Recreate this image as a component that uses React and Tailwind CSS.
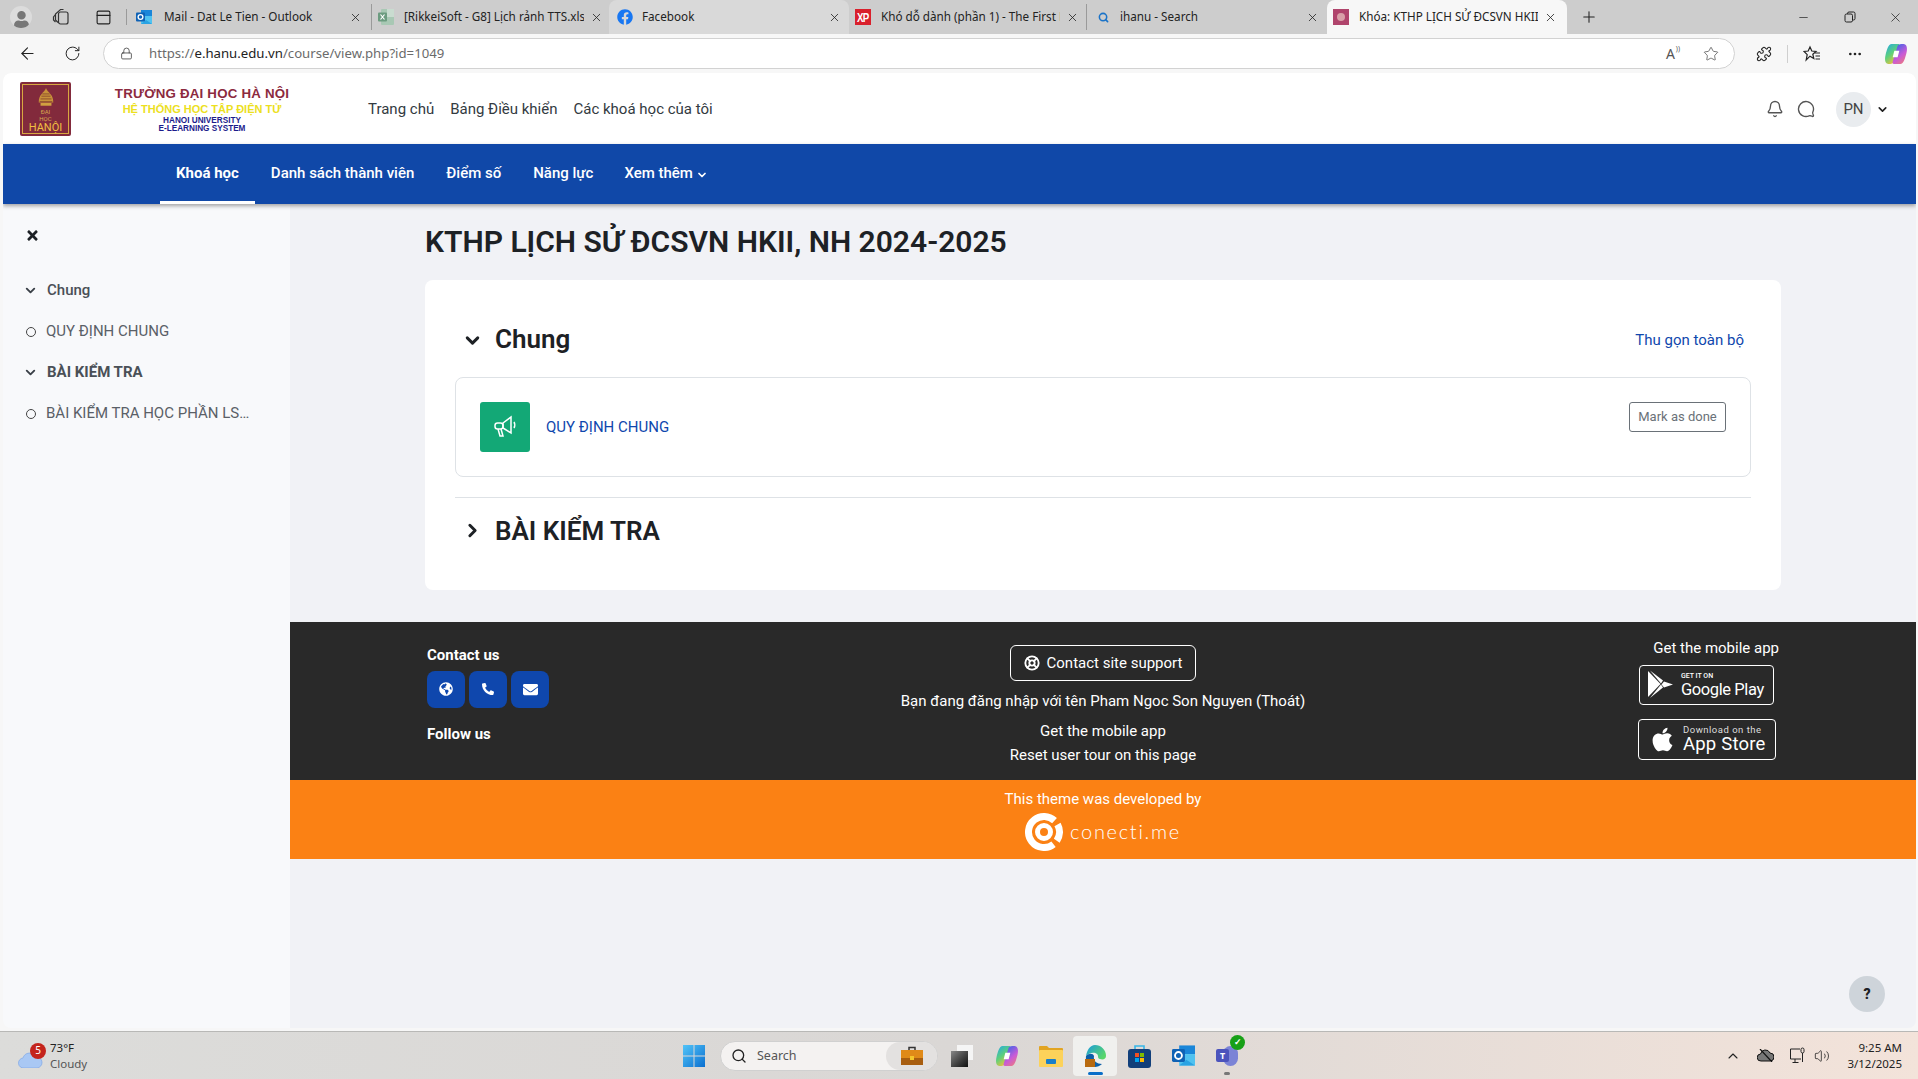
import {
  ArrowLeft,
  Bell,
  ChevronDown,
  ChevronRight,
  ChevronUp,
  Ellipsis,
  LifeBuoy,
  Lock,
  MessageCircle,
  Minus,
  PanelTop,
  Plus,
  Puzzle,
  RotateCw,
  Search,
  Star,
  Volume2,
  X,
} from "lucide-react";
import {
  FaApple,
  FaEnvelope,
  FaFacebook,
  FaGlobeAmericas,
  FaPhoneAlt,
  FaTimes,
  FaUser,
} from "react-icons/fa";

const chromeFont = "font-['Noto_Sans',sans-serif]";

function OutlookIcon({ size = 16 }) {
  return (
    <svg width={size} height={size} viewBox="0 0 16 16">
      <rect x="5" y="1" width="11" height="6" fill="#1a86d9" />
      <rect x="5" y="7" width="11" height="8" fill="#50c2f0" />
      <path d="M5 15l5-4 6 4z" fill="#2aa3e3" />
      <rect x="0" y="3.5" width="9" height="9" rx="1" fill="#0f62b5" />
      <circle cx="4.5" cy="8" r="2.4" fill="none" stroke="#fff" strokeWidth="1.3" />
    </svg>
  );
}

function ExcelIcon() {
  return (
    <svg width="16" height="16" viewBox="0 0 16 16">
      <rect x="3" y="0" width="13" height="16" rx="1" fill="#a8c8b4" />
      <rect x="9" y="0" width="7" height="8" fill="#c9dcd0" />
      <rect x="0" y="3.5" width="9" height="9" rx="1" fill="#6c9c80" />
      <path d="M2.5 5.5l4 5M6.5 5.5l-4 5" stroke="#fff" strokeWidth="1.2" />
    </svg>
  );
}

function XpIcon() {
  return (
    <div className="flex h-4 w-4 items-center justify-center bg-[#d9202c] font-['Liberation_Sans',sans-serif] text-[13px] font-bold leading-none tracking-[-1px] text-white">
      <span className="scale-x-75">XP</span>
    </div>
  );
}

function HanuFavicon() {
  return (
    <div className="flex h-4 w-4 items-center justify-center bg-[#b0446c]">
      <div className="h-2 w-2 rounded-full bg-[#d9a0a8]" />
    </div>
  );
}

function CopilotMark({ size, idA, idB }) {
  return (
    <svg width={size} height={size} viewBox="0 0 20 20">
      <defs>
        <linearGradient id={idA} x1="0" y1="0" x2="0.6" y2="1">
          <stop offset="0" stopColor="#1fa8e8" />
          <stop offset="0.55" stopColor="#5fd07a" />
          <stop offset="1" stopColor="#f3c13a" />
        </linearGradient>
        <linearGradient id={idB} x1="0.4" y1="0" x2="1" y2="1">
          <stop offset="0" stopColor="#4a62e6" />
          <stop offset="0.5" stopColor="#c85ad8" />
          <stop offset="1" stopColor="#f5806a" />
        </linearGradient>
      </defs>
      <path d="M6 1h6c1 0 1.300 1 1 2L9 16c-.5 2-2 3-4 3H3C0 19-.5 15 .5 11 1.500 7 3 1 6 1z" fill={`url(#${idA})`} />
      <path d="M14 19H8c-1 0-1.300-1-1-2L11 4c.5-2 2-3 4-3h2c3 0 3.500 4 2.500 8-1 4-2.500 10-5.500 10z" fill={`url(#${idB})`} />
      <path d="M8.500 7h4.500l-1.500 6H7z" fill="#fff" />
    </svg>
  );
}

const tabs = [
  { key: "mail", title: "Mail - Dat Le Tien - Outlook", icon: <OutlookIcon />, box: "w-[245px] pl-[9px] pr-[9px]", text: "ml-[12px]", sep: true },
  { key: "xls", title: "[RikkeiSoft - G8] Lịch rảnh TTS.xlsx", icon: <ExcelIcon />, box: "w-[237px] pl-[6px] pr-[6px]", text: "ml-[10px]" },
  { key: "fb", title: "Facebook", icon: <FaFacebook className="text-[16px] text-[#1877f2]" />, box: "w-[240px] pl-[8px] pr-[8px] bg-[#d9d9d9] rounded-lg rounded-b-none", text: "ml-[9px]" },
  { key: "xp", title: "Khó dỗ dành (phần 1) - The First News", icon: <XpIcon />, box: "w-[238px] pl-[6px] pr-[7px]", text: "ml-[10px]", sep: true },
  { key: "search", title: "ihanu - Search", icon: <Search size={11} strokeWidth={3.4} className="text-[#1a73c8]" />, box: "w-[240px] pl-[8px] pr-[8px]", text: "ml-[9px]" },
  { key: "hanu", title: "Khóa: KTHP LỊCH SỬ ĐCSVN HKII, NH 2024-2025", icon: <HanuFavicon />, box: "w-[240px] pl-[6px] pr-[10px] bg-[#f7f7f7] rounded-lg rounded-b-none", text: "ml-[10px]" },
];

function BrowserTab({ tab }) {
  return (
    <div className={`flex h-[34px] shrink-0 items-center ${tab.box} ${tab.sep ? "border-r border-[#9a9a9a] [border-image:linear-gradient(transparent_15%,#9a9a9a_15%,#9a9a9a_85%,transparent_85%)_1]" : ""}`}>
      <div className="flex w-4 shrink-0 justify-center">{tab.icon}</div>
      <span className={`${tab.text} min-w-0 flex-1 overflow-hidden whitespace-nowrap text-[11.7px] text-[#222]`}>
        {tab.title}
      </span>
      <X size={13} strokeWidth={1.5} className="ml-[6px] shrink-0 text-[#222]" />
    </div>
  );
}

function TabBar() {
  return (
    <div className={`flex h-[34px] items-center bg-[#cdcdcd] ${chromeFont}`}>
      <div className="flex w-[127px] shrink-0 items-center border-r border-[#9a9a9a] [border-image:linear-gradient(transparent_15%,#9a9a9a_15%,#9a9a9a_85%,transparent_85%)_1]">
        <div className="ml-[10px] flex h-[22px] w-[22px] items-end justify-center overflow-hidden rounded-full bg-[#dcdcdc] text-[#777]">
          <FaUser className="text-[17px]" />
        </div>
        <svg width="18" height="18" viewBox="0 0 18 18" className="ml-[20px]" fill="none" stroke="#333" strokeWidth="1.2">
          <rect x="6.5" y="4" width="9.5" height="12" rx="2" />
          <path d="M6 14.5L3.5 12V6l5-4.5h3" />
          <path d="M3.5 6.5L1.5 9v3l2 2" />
        </svg>
        <PanelTop size={17} strokeWidth={1.6} className="ml-[25px] text-[#222]" />
      </div>
      {tabs.map((tab) => (
        <BrowserTab key={tab.key} tab={tab} />
      ))}
      <Plus size={18} strokeWidth={1.4} className="ml-[13px] text-[#222]" />
      <div className="flex flex-1 items-center justify-end pr-[15px] text-[#222]">
        <Minus size={13} strokeWidth={1.3} />
        <svg width="12" height="12" viewBox="0 0 12 12" className="ml-[34px]" fill="none" stroke="#222">
          <rect x="1" y="3" width="7.5" height="8" rx="1.5" />
          <path d="M3.5 3V2.5A1.5 1.5 0 0 1 5 1h4.5A1.5 1.5 0 0 1 11 2.5v5A1.5 1.5 0 0 1 9.5 9H8.5" />
        </svg>
        <X size={15} strokeWidth={1.2} className="ml-[32px]" />
      </div>
    </div>
  );
}

function Toolbar() {
  return (
    <div className={`flex h-[39px] items-center bg-[#f7f7f7] ${chromeFont}`}>
      <ArrowLeft size={19} strokeWidth={1.4} className="ml-[18px] shrink-0 text-[#222]" />
      <RotateCw size={17} strokeWidth={1.4} className="ml-[27px] shrink-0 text-[#222]" />
      <div className="ml-[22px] flex h-[31px] w-[1632px] shrink-0 items-center rounded-full border border-[#d2d2d2] bg-white">
        <Lock size={13} strokeWidth={1.4} className="ml-[16px] text-[#333]" />
        <span className="ml-[16px] pt-[1px] text-[13.2px] text-[#6b6b6b]">
          https://<span className="text-[#222]">e.hanu.edu.vn</span>/course/view.php?id=1049
        </span>
        <div className="ml-auto flex items-center pr-[15px] text-[#555]">
          <span className="relative text-[14px] leading-none">
            A
            <span className="absolute -right-[5px] -top-[2px] text-[7px]">))</span>
          </span>
          <Star size={16} strokeWidth={1.2} className="ml-[28px]" />
        </div>
      </div>
      <Puzzle size={16} strokeWidth={1.6} className="ml-[21px] shrink-0 text-[#222]" />
      <div className="ml-[15px] h-[18px] w-px bg-[#cfcfcf]" />
      <svg width="18" height="18" viewBox="0 0 18 18" fill="none" stroke="#222" strokeWidth="1.2" className="ml-[15px] shrink-0">
        <path d="M7 2l1.8 4 4.2.4-3.2 2.8 1 4.3L7 11.2 3.2 15l1-5.3L1 6.4 5.2 6z" />
        <path d="M12 8h5M12.5 11h4.5M12.5 14h4.5" />
      </svg>
      <Ellipsis size={16} className="ml-[26px] shrink-0 text-[#222]" />
      <div className="ml-[22px] shrink-0">
        <CopilotMark size={22} idA="copA" idB="copB" />
      </div>
    </div>
  );
}

function SiteLogo() {
  return (
    <div className="flex items-center">
      <div className="ml-[17px] h-[54px] w-[51px] shrink-0 rounded-[2px] bg-[#822a3c] p-[2px]">
        <div className="flex h-full w-full flex-col items-center border border-[#d8a840] pt-[3px]">
          <svg width="20" height="22" viewBox="0 0 20 22">
            <path d="M10 0c1 3 3 4 5 7 2 2 3 5 3 9H2c0-4 1-7 3-9 2-3 4-4 5-7z" fill="#c8913a" />
            <path d="M4 12h12M5 9h10M6 6.5h8M3 15h14" stroke="#7a3a28" strokeWidth="0.8" />
            <rect x="4" y="16.5" width="12" height="3" fill="#d0a040" />
          </svg>
          <span className="text-[6px] leading-[7px] text-[#d8a850]">ĐẠI</span>
          <span className="text-[6px] leading-[7px] text-[#d8a850]">HỌC</span>
          <span className="text-[11px] leading-[11px] text-[#f0c040]">HANỘI</span>
        </div>
      </div>
      <div className="ml-[43px] flex w-[176px] flex-col items-center font-['Liberation_Sans',sans-serif] font-bold">
        <span className="whitespace-nowrap text-[13.3px] leading-[17px] tracking-[0.2px] text-[#8c2a3e]">TRƯỜNG ĐẠI HỌC HÀ NỘI</span>
        <span className="mt-[1px] whitespace-nowrap text-[11px] leading-[13px] text-[#ece01e]">HỆ THỐNG HỌC TẬP ĐIỆN TỬ</span>
        <span className="mt-[1px] whitespace-nowrap text-[8.2px] leading-[8px] text-[#1c1c8c]">HANOI UNIVERSITY</span>
        <span className="whitespace-nowrap text-[8.2px] leading-[8px] text-[#1c1c8c]">E-LEARNING SYSTEM</span>
      </div>
    </div>
  );
}

function SiteHeader() {
  return (
    <div className="flex h-[71px] shrink-0 items-center rounded-t-lg bg-white text-[#333a41]">
      <SiteLogo />
      <nav className="ml-[78px] flex pt-[1px] text-[15px]">
        <span>Trang chủ</span>
        <span className="ml-[16px]">Bảng Điều khiển</span>
        <span className="ml-[16px]">Các khoá học của tôi</span>
      </nav>
      <div className="ml-auto flex items-center pr-[27px] pt-[1px]">
        <Bell size={18} strokeWidth={1.8} className="text-[#555]" />
        <MessageCircle size={18} strokeWidth={1.8} className="ml-[13px] -scale-x-100 text-[#555]" />
        <div className="ml-[21px] flex h-[35px] w-[35px] items-center justify-center rounded-full bg-[#e9ecef] text-[15px] text-[#444]">
          PN
        </div>
        <ChevronDown size={13} strokeWidth={3} className="ml-[5px] text-[#222]" />
      </div>
    </div>
  );
}

const courseLinks = ["Danh sách thành viên", "Điểm số", "Năng lực"];

function CourseNav() {
  return (
    <div className="z-10 flex h-[60px] shrink-0 items-stretch bg-[#1048a8] pl-[157px] text-[15px] font-medium text-white shadow-[0_2px_4px_rgba(0,0,0,0.35)]">
      <div className="flex items-center border-b-[3px] border-white px-[16px] pt-[1px] font-bold">Khoá học</div>
      {courseLinks.map((link) => (
        <div key={link} className="flex items-center px-[16px] pb-[1px]">
          {link}
        </div>
      ))}
      <div className="ml-[-1px] flex items-center gap-[3px] px-[16px] pb-[1px]">
        Xem thêm
        <ChevronDown size={12} strokeWidth={3.5} className="mt-[2px]" />
      </div>
    </div>
  );
}

function SidebarSection({ title, bold }) {
  return (
    <div className="flex h-[41px] items-center text-[#4a5057]">
      <ChevronDown size={15} strokeWidth={3} className="ml-[-2px] w-[15px] text-[#3a4047]" />
      <span className={`ml-[9px] text-[15px] ${bold ? "font-bold" : "font-medium"}`}>{title}</span>
    </div>
  );
}

function SidebarItem({ title }) {
  return (
    <div className="flex h-[41px] items-center text-[#5a6067]">
      <div className="ml-[1px] h-[10px] w-[10px] rounded-full border border-[#444]" />
      <span className="ml-[10px] w-[205px] truncate text-[15px]">{title}</span>
    </div>
  );
}

function Sidebar() {
  return (
    <aside className="w-[287px] shrink-0 bg-[#f8f9fb] pl-[22px]">
      <div className="flex h-[62px] items-center">
        <FaTimes className="text-[15px] text-[#1d2125]" />
      </div>
      <div className="mt-[4px] flex flex-col">
        <SidebarSection title="Chung" />
        <SidebarItem title="QUY ĐỊNH CHUNG" />
        <SidebarSection title="BÀI KIỂM TRA" bold />
        <SidebarItem title="BÀI KIỂM TRA HỌC PHẦN LSĐCSVN HKII" />
      </div>
    </aside>
  );
}

function MegaphoneIcon() {
  return (
    <svg width="26" height="26" viewBox="0 0 26 26" fill="none" stroke="#fff" strokeWidth="1.5">
      <path d="M11 9l8-6v16l-8-5z" />
      <rect x="3" y="9" width="8" height="6" rx="2.5" />
      <path d="M6 15l2 7h3l-2-7" />
      <path d="M22 8c1 1.5 1 4.5 0 6" />
    </svg>
  );
}

function CourseCard() {
  return (
    <div className="h-[310px] rounded-lg bg-white px-[30px] pt-[40px]">
      <div className="flex h-[40px] items-center">
        <ChevronDown size={21} strokeWidth={3.4} className="ml-[7px] text-[#1d2125]" />
        <h3 className="mb-[2px] ml-[12px] text-[26px] font-semibold text-[#1d2125]">Chung</h3>
        <a className="ml-auto mr-[7px] pt-[1px] text-[15px] text-[#0f47ad]">Thu gọn toàn bộ</a>
      </div>
      <div className="mt-[17px] flex h-[100px] items-start rounded-lg border border-[#dee2e6] px-[24px] pt-[24px]">
        <div className="flex h-[50px] w-[50px] items-center justify-center rounded-[3px] bg-[#13a876]">
          <MegaphoneIcon />
        </div>
        <a className="ml-[16px] mt-[14px] text-[15px] text-[#0f47ad]">QUY ĐỊNH CHUNG</a>
        <button className="ml-auto flex h-[30px] w-[97px] items-center justify-center rounded-[3px] border border-[#6a7178] text-[13px] text-[#6a7178]">
          Mark as done
        </button>
      </div>
      <div className="mt-[20px] border-t border-[#dee2e6] pt-[12px]">
        <div className="flex h-[40px] items-center">
          <ChevronRight size={21} strokeWidth={3.4} className="ml-[7px] text-[#1d2125]" />
          <h3 className="ml-[12px] mt-[2px] text-[26px] font-semibold text-[#1d2125]">BÀI KIỂM TRA</h3>
        </div>
      </div>
    </div>
  );
}

const contactIcons = [
  <FaGlobeAmericas key="web" className="mb-[2px] text-[14px]" />,
  <FaPhoneAlt key="phone" className="mb-[2px] text-[12px]" />,
  <FaEnvelope key="mail" className="mb-[1px] text-[15px]" />,
];

function GooglePlayBadge() {
  return (
    <div className="mr-[5px] mt-[7px] flex h-[40px] w-[135px] items-center rounded-[4px] border border-white pl-[8px] text-white">
      <svg width="26" height="30" viewBox="0 0 26 30" fill="#fff">
        <path d="M0 1l12.5 13L0 27z" />
        <path d="M2 0.5l13 10-2 3z" />
        <path d="M2 28l11-13.5 2 3z" />
        <path d="M16 11.5l9 3-9 3-2.5-3z" />
      </svg>
      <div className="ml-[7px] flex flex-col">
        <span className="text-[7px] font-medium leading-[8px]">GET IT ON</span>
        <span className="text-[16.5px] leading-[19px] tracking-[-0.4px]">Google Play</span>
      </div>
    </div>
  );
}

function AppStoreBadge() {
  return (
    <div className="mr-[3px] mt-[14px] flex h-[41px] w-[138px] items-center rounded-[4px] border border-white pl-[10px] text-white">
      <FaApple className="text-[27px]" />
      <div className="ml-[7px] flex flex-col">
        <span className="text-[9.5px] leading-[9px] tracking-[0.5px] text-[#ddd]">Download on the</span>
        <span className="text-[18.5px] leading-[20px] tracking-[0.2px]">App Store</span>
      </div>
    </div>
  );
}

function SiteFooter() {
  return (
    <div className="mt-[32px] grid h-[158px] grid-cols-3 bg-[#292929] px-[137px] text-[15px] text-white">
      <div className="pt-[23px]">
        <div className="font-bold leading-[20px]">Contact us</div>
        <div className="mt-[6px] flex gap-[4px]">
          {contactIcons.map((icon) => (
            <div key={icon.key} className="flex h-[37px] w-[38px] items-center justify-center rounded-lg bg-[#0f47ad]">
              {icon}
            </div>
          ))}
        </div>
        <div className="mt-[16px] font-bold leading-[20px]">Follow us</div>
      </div>
      <div className="flex flex-col items-center whitespace-nowrap pt-[23px] leading-[20px]">
        <div className="flex h-[36px] w-[186px] items-center justify-center gap-[7px] rounded-[6px] border border-white">
          <LifeBuoy size={16} strokeWidth={2.8} />
          Contact site support
        </div>
        <div className="mt-[10px]">Bạn đang đăng nhập với tên Pham Ngoc Son Nguyen (Thoát)</div>
        <div className="mt-[10px]">Get the mobile app</div>
        <div className="mt-[4px]">Reset user tour on this page</div>
      </div>
      <div className="flex flex-col items-end pt-[16px]">
        <div className="leading-[20px]">Get the mobile app</div>
        <GooglePlayBadge />
        <AppStoreBadge />
      </div>
    </div>
  );
}

function ThemeCredit() {
  return (
    <div className="flex h-[79px] flex-col items-center bg-[#fb8114] pt-[9px] text-white">
      <div className="text-[15px] leading-[20px]">This theme was developed by</div>
      <div className="mt-[4px] flex h-[38px] items-center">
        <svg width="38" height="38" viewBox="0 0 38 38" fill="none" stroke="#fff">
          <circle cx="19" cy="19" r="15.5" strokeWidth="7" strokeDasharray="70 5 17 5.4" transform="rotate(52 19 19)" />
          <circle cx="19" cy="19" r="6.500" strokeWidth="5" />
        </svg>
        <span className="mb-[3px] ml-[7px] font-['Lato',sans-serif] text-[20px] font-light tracking-[1.7px]">conecti.me</span>
      </div>
    </div>
  );
}

function MainColumn() {
  return (
    <main className="relative flex min-w-0 flex-1 flex-col bg-[#f1f2f6]">
      <div className="px-[135px]">
        <h1 className="mb-[2px] flex h-[74px] items-center text-[30px] font-semibold text-[#1d2125]">
          KTHP LỊCH SỬ ĐCSVN HKII, NH 2024-2025
        </h1>
        <CourseCard />
      </div>
      <SiteFooter />
      <ThemeCredit />
      <div className="absolute bottom-[16px] right-[31px] flex h-[36px] w-[36px] items-center justify-center rounded-full bg-[#ced4da] text-[14px] font-black text-[#1d2125]">
        ?
      </div>
    </main>
  );
}

function WindowsLogo() {
  return (
    <svg width="24" height="24" viewBox="0 0 24 24">
      <defs>
        <linearGradient id="win" x1="0" y1="0" x2="1" y2="1">
          <stop offset="0" stopColor="#52c4f8" />
          <stop offset="1" stopColor="#0a6fd0" />
        </linearGradient>
      </defs>
      <path d="M1 1h10.5v10.5H1zM12.5 1H23v10.5H12.5zM1 12.5h10.5V23H1zM12.5 12.5H23V23H12.5z" fill="url(#win)" />
    </svg>
  );
}

function Briefcase() {
  return (
    <svg width="22" height="20" viewBox="0 0 22 20">
      <path d="M8 4V1.5h6V4" fill="none" stroke="#333" strokeWidth="1.5" />
      <rect x="0" y="4" width="22" height="8" fill="#e08a18" />
      <rect x="0" y="12" width="22" height="7" fill="#a85e10" />
      <rect x="9" y="10" width="4" height="4" fill="#f5c52a" />
    </svg>
  );
}

function EdgeIcon() {
  return (
    <svg width="24" height="24" viewBox="0 0 24 24">
      <defs>
        <linearGradient id="edge" x1="0" y1="0" x2="1" y2="0.6">
          <stop offset="0" stopColor="#1a9be0" />
          <stop offset="1" stopColor="#58d66a" />
        </linearGradient>
      </defs>
      <path d="M12 1a11 11 0 0 1 11 11c0 3-3 4-6 3-3-.5-1-3-3-5-3-2.500-8-1-11 2C4 6 7 1 12 1z" fill="url(#edge)" />
      <path d="M3 12c3-3 7-3 8 0-1 5 3 8 8 8-2 2-5 3-7 3C6 23 2 18 3 12z" fill="#0c5fa8" />
      <rect x="2" y="15" width="10" height="8" fill="#b86a10" />
    </svg>
  );
}

function TaskbarIcon({ children, gapClass = "", active, badge, dot }) {
  return (
    <div className={`relative flex h-[40px] w-[44px] shrink-0 items-center justify-center rounded-[4px] ${gapClass} ${active ? "bg-[#f0f0ee]" : ""}`}>
      {children}
      {active && <div className="absolute bottom-[1px] h-[3px] w-[15px] rounded-full bg-[#0a6fc8]" />}
      {dot && <div className="absolute bottom-[1px] h-[3px] w-[6px] rounded-full bg-[#777]" />}
      {badge}
    </div>
  );
}

function Taskbar() {
  return (
    <div className={`flex h-[48px] shrink-0 items-center border-t border-[#b8b8b6] bg-linear-to-r from-[#dcdcda] via-[#dad7d5] to-[#f3e3da] ${chromeFont}`}>
      <div className="flex w-[672px] shrink-0 items-center pl-[18px]">
        <div className="relative flex h-[24px] w-[28px] items-end">
          <svg width="25" height="16" viewBox="0 0 25 16">
            <path d="M6 16a5 5 0 0 1-1-10 7 7 0 0 1 13-1 5.500 5.500 0 0 1 1 11z" fill="#a9c8f4" stroke="#7fa7e6" strokeWidth="0.7" />
          </svg>
          <div className="absolute -top-[1px] left-[12px] flex h-[16px] w-[16px] items-center justify-center rounded-full bg-[#c4241c] text-[10px] text-white">
            5
          </div>
        </div>
        <div className="ml-[4px] flex flex-col text-[11.5px] leading-[16px]">
          <span className="text-[#222]">73°F</span>
          <span className="text-[#555]">Cloudy</span>
        </div>
      </div>
      <TaskbarIcon>
        <WindowsLogo />
      </TaskbarIcon>
      <div className="ml-[4px] flex h-[30px] w-[218px] shrink-0 items-center rounded-full border border-[#d0d0d0] bg-[#f4f2f1] pl-[10px]">
        <Search size={16} strokeWidth={2} className="text-[#222]" />
        <span className="ml-[10px] pt-[1px] text-[12.5px] text-[#555]">Search</span>
        <div className="ml-auto flex h-[28px] w-[51px] items-center justify-center rounded-full bg-[#e3e1e0]">
          <Briefcase />
        </div>
      </div>
      <TaskbarIcon>
        <div className="relative ml-[3px] h-[22px] w-[22px]">
          <div className="absolute right-0 top-0 h-[15px] w-[16px] bg-[#f5f5f5]" />
          <div className="absolute bottom-0 left-0 h-[16px] w-[17px] bg-linear-to-br from-[#888] to-[#111]" />
        </div>
      </TaskbarIcon>
      <TaskbarIcon gapClass="ml-[3px]">
        <CopilotMark size={22} idA="copC" idB="copD" />
      </TaskbarIcon>
      <TaskbarIcon>
        <svg width="24" height="22" viewBox="0 0 24 22">
          <path d="M0 2a1 1 0 0 1 1-1h7l2 2h13a1 1 0 0 1 1 1v4H0z" fill="#e2a422" />
          <rect x="0" y="5" width="24" height="17" rx="1" fill="#fcd25a" />
          <rect x="7" y="14" width="10" height="5" rx="1" fill="#1a7fc8" />
        </svg>
      </TaskbarIcon>
      <TaskbarIcon active>
        <EdgeIcon />
      </TaskbarIcon>
      <TaskbarIcon>
        <svg width="23" height="24" viewBox="0 0 23 24">
          <path d="M7 6V2h9v4" fill="none" stroke="#38b6e8" strokeWidth="1.6" />
          <rect x="0" y="5" width="23" height="19" rx="3" fill="#123f7a" />
          <rect x="7" y="9" width="4" height="4" fill="#f25022" />
          <rect x="12" y="9" width="4" height="4" fill="#7fba00" />
          <rect x="7" y="14" width="4" height="4" fill="#00a4ef" />
          <rect x="12" y="14" width="4" height="4" fill="#ffb900" />
        </svg>
      </TaskbarIcon>
      <TaskbarIcon>
        <OutlookIcon size={23} />
      </TaskbarIcon>
      <TaskbarIcon
        dot
        badge={
          <div className="absolute right-[4px] top-[-1px] flex h-[15px] w-[15px] items-center justify-center rounded-full bg-[#17a017] text-[9px] font-bold text-white">
            ✓
          </div>
        }
      >
        <div className="relative flex h-[20px] w-[22px] items-center">
          <div className="absolute right-0 top-0 h-[20px] w-[15px] rounded-lg bg-[#7b83d6]" />
          <div className="relative flex h-[13px] w-[13px] items-center justify-center rounded-[2px] bg-[#4b53bc] text-[9px] font-bold text-white">
            T
          </div>
        </div>
      </TaskbarIcon>
      <div className="flex flex-1 items-center justify-end pr-[16px] text-[#222]">
        <ChevronUp size={16} strokeWidth={1.6} />
        <svg width="17" height="13" viewBox="0 0 17 13" className="ml-[16px]">
          <path d="M4 12a3.500 3.500 0 0 1-.5-7 5 5 0 0 1 9.500-1 4 4 0 0 1 0 8z" fill="#777" stroke="#111" />
          <path d="M3 0l12 13" stroke="#111" strokeWidth="1.2" />
        </svg>
        <svg width="17" height="17" viewBox="0 0 17 17" className="ml-[15px]" fill="none" stroke="#222">
          <path d="M11 2H1.500v10H12" />
          <path d="M6 12v3M3.500 15.500h6" />
          <rect x="12" y="1" width="3" height="5" rx="1.500" />
          <path d="M13.500 6v9" />
        </svg>
        <Volume2 size={16} strokeWidth={1.2} className="ml-[8px] mr-[1px]" />
        <div className="ml-[16px] flex flex-col items-end text-[11.5px] leading-[16px]">
          <span>9:25 AM</span>
          <span>3/12/2025</span>
        </div>
      </div>
    </div>
  );
}

export default function App() {
  return (
    <div className="flex h-screen flex-col overflow-hidden bg-[#f7f7f7] font-['Roboto',sans-serif]">
      <TabBar />
      <Toolbar />
      <div className="ml-[3px] mr-[2px] flex min-h-0 flex-1 flex-col overflow-hidden rounded-lg">
        <SiteHeader />
        <CourseNav />
        <div className="flex min-h-0 flex-1">
          <Sidebar />
          <MainColumn />
        </div>
      </div>
      <div className="h-[3px] shrink-0" />
      <Taskbar />
    </div>
  );
}
